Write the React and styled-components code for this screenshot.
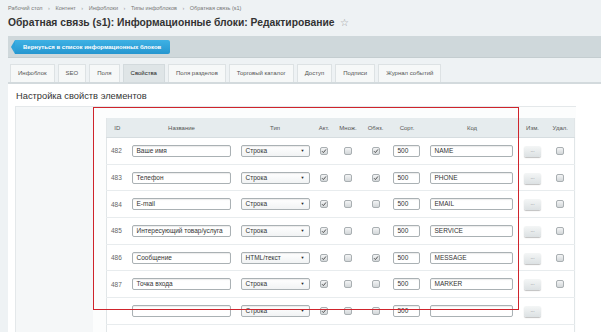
import styled, { createGlobalStyle } from "styled-components";

const GlobalStyle = createGlobalStyle`
    html, body {
        margin: 0;
        padding: 0;
        background: #eef2f4;
        overflow: hidden;
        font-family: "Liberation Sans", Arial, sans-serif;
    }
`;

const rows = [
    { id: 482, name: "Ваше имя", type: "Строка", req: true, code: "NAME" },
    { id: 483, name: "Телефон", type: "Строка", req: true, code: "PHONE" },
    { id: 484, name: "E-mail", type: "Строка", req: false, code: "EMAIL" },
    { id: 485, name: "Интересующий товар/услуга", type: "Строка", req: false, code: "SERVICE" },
    { id: 486, name: "Сообщение", type: "HTML/текст", req: true, code: "MESSAGE" },
    { id: 487, name: "Точка входа", type: "Строка", req: false, code: "MARKER" },
    { id: "", name: "", type: "Строка", req: false, code: "", isNew: true },
    { id: "", name: "", type: "", req: false, code: "", isNew: true, stub: true },
];

const tabs = ["Инфоблок", "SEO", "Поля", "Свойства", "Поля разделов", "Торговый каталог", "Доступ", "Подписи", "Журнал событий"];

function Check({ on }) {
    return (
        <Box>
            {on && (
                <svg width="6" height="6" viewBox="0 0 6 6">
                    <path d="M1 3.2 L2.4 4.6 L5 1.4" fill="none" stroke="#555" strokeWidth="1" />
                </svg>
            )}
        </Box>
    );
}

export default function App () {
    return (
        <Page>
            <GlobalStyle />
            <Crumbs>
                Рабочий стол <Sep>›</Sep> Контент <Sep>›</Sep> Инфоблоки <Sep>›</Sep> Типы инфоблоков <Sep>›</Sep> Обратная связь (s1)
            </Crumbs>
            <Title>
                Обратная связь (s1): Информационные блоки: Редактирование
                <Star>☆</Star>
            </Title>
            <Toolbar>
                <BackButton>Вернуться в список информационных блоков</BackButton>
            </Toolbar>
            <Tabs>
                {tabs.map(t => <Tab key={t} active={t === "Свойства"}>{t}</Tab>)}
            </Tabs>
            <Panel>
                <Heading>Настройка свойств элементов</Heading>
                <Settings>
                    <LeftCell />
                    <RightCell>
                        <Table>
                            <colgroup>
                                <col style={{ width: 21 }} />
                                <col style={{ width: 108 }} />
                                <col style={{ width: 79 }} />
                                <col style={{ width: 19 }} />
                                <col style={{ width: 29 }} />
                                <col style={{ width: 26 }} />
                                <col style={{ width: 37 }} />
                                <col style={{ width: 93 }} />
                                <col style={{ width: 28 }} />
                                <col style={{ width: 28 }} />
                            </colgroup>
                            <thead>
                                <tr>
                                    <Th>ID</Th>
                                    <Th>Название</Th>
                                    <Th>Тип</Th>
                                    <Th>Акт.</Th>
                                    <Th>Множ.</Th>
                                    <Th>Обяз.</Th>
                                    <Th>Сорт.</Th>
                                    <Th>Код</Th>
                                    <Th>Изм.</Th>
                                    <Th>Удал.</Th>
                                </tr>
                            </thead>
                            <tbody>
                                {rows.map((r, i) => r.stub ? (
                                    <tr key={i}>
                                        <Td left></Td>
                                        <Td left><Field w={99} /></Td>
                                        <Td left><Select /></Td>
                                        <Td></Td>
                                        <Td></Td>
                                        <Td></Td>
                                        <Td left><Field w={27} /></Td>
                                        <Td left><Field w={83} /></Td>
                                        <Td></Td>
                                        <Td></Td>
                                    </tr>
                                ) : (
                                    <tr key={i}>
                                        <Td left>{r.id}</Td>
                                        <Td left><Field w={99}>{r.name}</Field></Td>
                                        <Td left><Select>{r.type}<Arrow>▼</Arrow></Select></Td>
                                        <Td><Check on={true} /></Td>
                                        <Td><Check on={false} /></Td>
                                        <Td><Check on={r.req} /></Td>
                                        <Td left><Field w={27}>500</Field></Td>
                                        <Td left><Field w={83}>{r.code}</Field></Td>
                                        <Td><EditButton>...</EditButton></Td>
                                        <Td>{!r.isNew && <Check on={false} />}</Td>
                                    </tr>
                                ))}
                            </tbody>
                        </Table>
                    </RightCell>
                    <Marker />
                </Settings>
            </Panel>
        </Page>
    );
}

const Page = styled.div`
    width: 601px;
    height: 332px;
    overflow: hidden;
`;

const Crumbs = styled.div`
    padding: 4px 0 0 8px;
    height: 8px;
    font-size: 5.5px;
    color: #777;
    line-height: 8px;
    white-space: nowrap;
`;

const Sep = styled.span`
    margin: 0 4px;
    color: #999;
`;

const Title = styled.h1`
    margin: 2px 0 0 8px;
    height: 17px;
    font-size: 10.3px;
    font-weight: bold;
    color: #333;
    line-height: 17px;
    white-space: nowrap;
`;

const Star = styled.span`
    margin-left: 6px;
    font-size: 10px;
    font-weight: normal;
    color: #999;
`;

const Toolbar = styled.div`
    margin: 5px 0 0 8px;
    height: 21px;
    background: #cfd8db;
    border-bottom: 1px solid #c4cdd0;
    display: flex;
    align-items: center;
    padding-left: 3px;
`;

const BackButton = styled.div`
    position: relative;
    margin-left: 4px;
    height: 14px;
    padding: 0 9px 0 8px;
    background: linear-gradient(#3eb1e4, #2596cf);
    border-radius: 0 2px 2px 0;
    color: #fff;
    font-size: 6px;
    font-weight: bold;
    line-height: 14px;
    white-space: nowrap;
    &::before {
        content: "";
        position: absolute;
        left: -4px;
        top: 0;
        border-style: solid;
        border-width: 7px 4px 7px 0;
        border-color: transparent #2fa2d9 transparent transparent;
    }
`;

const Tabs = styled.div`
    margin: 6px 0 0 10px;
    display: flex;
    gap: 3px;
    height: 18px;
`;

const Tab = styled.div`
    padding: 0 7px;
    height: 18px;
    box-sizing: border-box;
    border: 1px solid ${props => props.active ? "#d3dadd" : "#dde2e4"};
    border-bottom: none;
    background: ${props => props.active ? "#dfe5e7" : "#f6f8f8"};
    color: ${props => props.active ? "#222" : "#555"};
    font-size: 6px;
    line-height: 17px;
    white-space: nowrap;
`;

const Panel = styled.div`
    margin-left: 8px;
    height: 260px;
    background: #fff;
    border-top: 2px solid #d3dadd;
    padding: 4px 0 0 7px;
`;

const Heading = styled.div`
    padding-left: 1px;
    height: 17px;
    font-size: 9.3px;
    color: #333;
    line-height: 17px;
`;

const Settings = styled.div`
    position: relative;
    margin-top: 1px;
    width: 560px;
    display: flex;
    border-top: 1px solid #e4e8ea;
    border-left: 1px solid #e4e8ea;
    height: 240px;
`;

const LeftCell = styled.div`
    width: 77px;
    background: #f5f7f8;
`;

const RightCell = styled.div`
    flex: 1;
    background: #fcfdfd;
    padding: 11px 0 0 13px;
`;

const Marker = styled.div`
    position: absolute;
    left: 77px;
    top: 0;
    width: 426px;
    height: 203px;
    box-sizing: border-box;
    border: 1px solid #cf242c;
    pointer-events: none;
`;

const Table = styled.table`
    table-layout: fixed;
    width: 468px;
    border-collapse: collapse;
    border-left: 1px solid #e1e6e8;
    border-right: 1px solid #e1e6e8;
    background: #fff;
`;

const Th = styled.th`
    height: 19px;
    padding: 0;
    background: #e6ecee;
    border-bottom: 1px solid #d6dde0;
    font-size: 6px;
    font-weight: normal;
    color: #555;
    text-align: center;
`;

const Td = styled.td`
    height: 25.7px;
    padding: 0 0 0 ${props => props.left ? "4px" : "0"};
    border-bottom: 1px solid #e8ecee;
    font-size: 6.5px;
    color: #666;
    text-align: ${props => props.left ? "left" : "center"};
    vertical-align: middle;
`;

const Field = styled.div`
    width: ${props => props.w}px;
    height: 12px;
    box-sizing: border-box;
    border: 1px solid #aab1b4;
    border-radius: 2px;
    box-shadow: inset 0 1px 1px rgba(0, 0, 0, 0.08);
    background: #fff;
    padding-left: 4px;
    font-size: 6.5px;
    line-height: 10px;
    color: #333;
    white-space: nowrap;
    overflow: hidden;
`;

const Select = styled(Field).attrs({ w: 69 })`
    position: relative;
    margin-left: 1px;
    background: linear-gradient(#fff, #f1f3f4);
`;

const Arrow = styled.span`
    position: absolute;
    right: 4px;
    top: 0;
    font-size: 4px;
    color: #222;
`;

const Box = styled.div`
    display: inline-flex;
    align-items: center;
    justify-content: center;
    width: 8px;
    height: 8px;
    box-sizing: border-box;
    border: 1px solid #a9afb2;
    border-radius: 2px;
    background: linear-gradient(#f3f4f5, #d3d7d9);
    vertical-align: middle;
`;

const EditButton = styled.div`
    display: inline-block;
    width: 17px;
    height: 11px;
    margin-top: 1px;
    border-radius: 2px;
    background: linear-gradient(#f4f6f6, #dce1e3);
    box-shadow: 0 1px 1px rgba(0, 0, 0, 0.25);
    font-size: 5px;
    line-height: 9px;
    color: #777;
    text-align: center;
`;
